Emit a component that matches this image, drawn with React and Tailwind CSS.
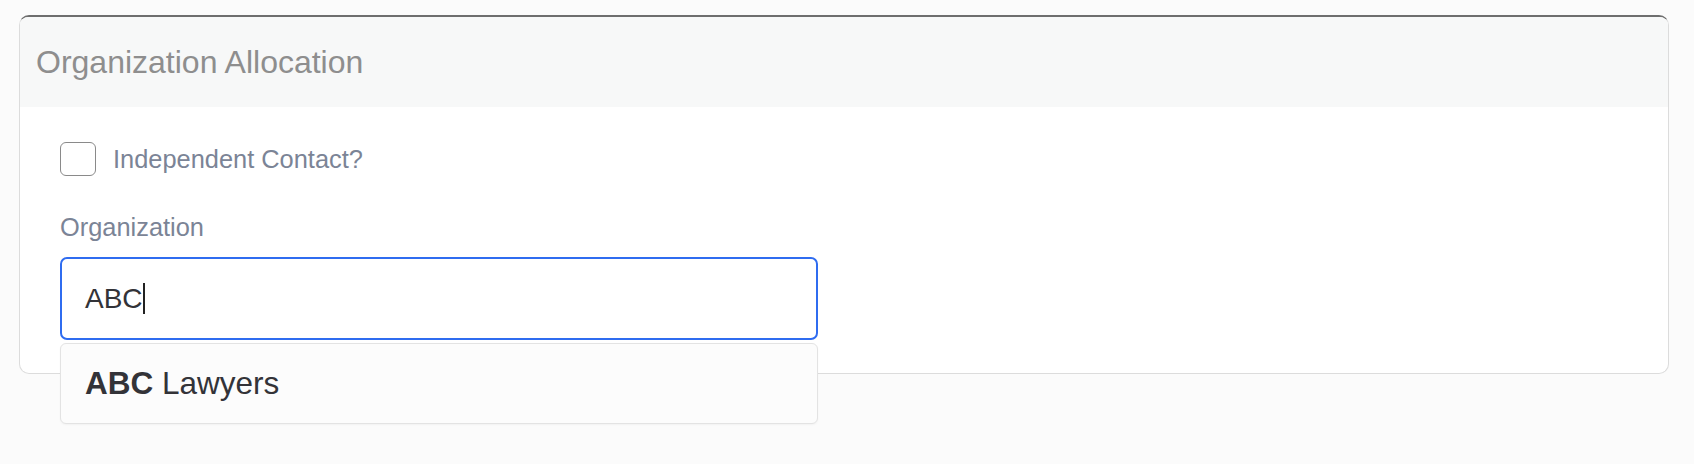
export default function App() {
  return (
    <div
      className="w-[1694px] h-[464px] bg-[#fbfbfb] pt-[15px] pl-[19px] pr-[25px]"
      style={{ fontFamily: '"Liberation Sans", Arial, sans-serif' }}
    >
      <div className="rounded-[10px] border border-[#dcdcdc] border-t-2 border-t-[#6e6e6e] bg-white">
        <div className="h-[90px] bg-[#f7f8f8] rounded-t-[8px] flex items-center pl-[16px]">
          <span className="text-[32px] leading-none text-[#8e8e8e]">Organization Allocation</span>
        </div>
        <div className="pl-[40px] pt-[35px] pb-[33px]">
          <div className="flex items-center gap-[17px] h-[34px]">
            <div className="w-[36px] h-[34px] rounded-[6px] border-[1.5px] border-[#8a8a8a] bg-white" />
            <span className="text-[25.4px] leading-[30px] text-[#7b8496]">Independent Contact?</span>
          </div>
          <div className="mt-[36px] mb-[15px] text-[25.4px] leading-[30px] text-[#7b8496]">Organization</div>
          <div className="relative w-[758px]">
            <div className="h-[83px] w-full rounded-[7px] border-2 border-[#2f6cf0] bg-white flex items-center pl-[23px]">
              <span className="text-[28px] leading-none text-[#333338]">ABC</span>
              <span className="w-[2px] h-[31px] bg-[#222]" />
            </div>
            <div className="absolute left-0 right-0 top-[86px] h-[81px] rounded-[6px] border-[1.5px] border-[#e3e3e3] bg-[#fcfcfc] flex items-center pl-[24px] shadow-[0_1px_2px_rgba(0,0,0,0.04)]">
              <span className="text-[31.5px] leading-none text-[#333338]">
                <b className="font-bold">ABC</b> Lawyers
              </span>
            </div>
          </div>
        </div>
      </div>
    </div>
  );
}
